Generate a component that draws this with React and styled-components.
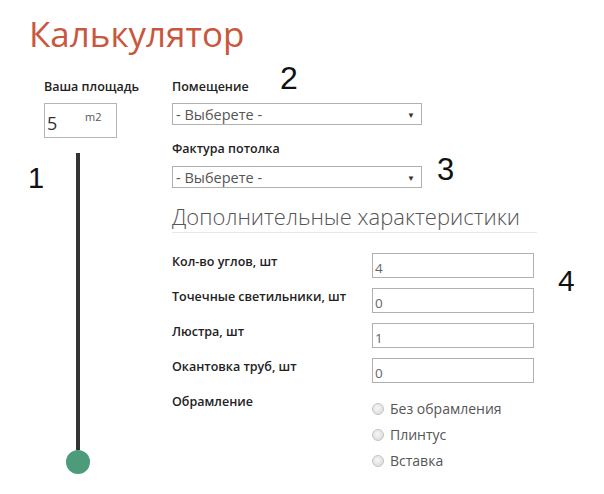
import styled, { createGlobalStyle } from "styled-components"

const GlobalStyle = createGlobalStyle`
  body {
    margin: 0;
    background: #fff;
    font-family: "Open Sans", "Noto Sans", sans-serif;
    color: #222;
  }
`

const Page = styled.div`
  position: relative;
  width: 604px;
  height: 494px;
  overflow: hidden;
`
const Title = styled.h1`
  margin: 14px 0 0 29px;
  font-size: 35px;
  line-height: 40px;
  font-weight: 400;
  color: #c9573e;
`
const Body = styled.div`
  display: flex;
  margin-top: 24px;
  padding-left: 44px;
`
const LeftColumn = styled.div`
  width: 128px;
  display: flex;
  flex-direction: column;
`
const RightColumn = styled.div`
  width: 365px;
  display: flex;
  flex-direction: column;
`
const Label = styled.div`
  font-size: 12.5px;
  line-height: 18px;
  font-weight: 600;
  color: #222;
  margin-bottom: ${(p) => p.$gap || 0}px;
`
const AreaBox = styled.div`
  width: 73px;
  height: 35px;
  box-sizing: border-box;
  border: 1px solid #b5b5b5;
  display: flex;
  align-items: flex-start;
`
const AreaInput = styled.input`
  width: 34px;
  border: none;
  outline: none;
  padding: 8px 0 0 2px;
  font-family: inherit;
  font-size: 18px;
  line-height: 22px;
  color: #333;
  background: transparent;
`
const Unit = styled.span`
  margin-left: 4px;
  padding-top: 6px;
  font-size: 11px;
  line-height: 14px;
  color: #555;
`
const Slider = styled.div`
  width: 24px;
  margin: 15px 0 0 22px;
  display: flex;
  flex-direction: column;
  align-items: center;
`
const Track = styled.div`
  width: 4px;
  height: 297px;
  background: #333;
`
const Knob = styled.div`
  width: 24px;
  height: 24px;
  border-radius: 50%;
  background: #4c9b7b;
`
const Field = styled.div`
  display: flex;
  flex-direction: column;
  margin-bottom: 15px;
`
const Select = styled.div`
  width: 250px;
  height: 22px;
  box-sizing: border-box;
  border: 1px solid #b0b0b0;
  display: flex;
  align-items: center;
  justify-content: space-between;
  padding: 0 6px 0 3px;
  font-size: 14.5px;
  color: #555;
`
const Arrow = styled.span`
  font-size: 8px;
  color: #333;
`
const Heading = styled.h2`
  margin: -2px 0 20px;
  padding-bottom: 1px;
  font-size: 22px;
  line-height: 30px;
  font-weight: 300;
  color: #555;
  border-bottom: 1px solid #e8e8e8;
`
const Row = styled.div`
  display: flex;
  align-items: flex-start;
  margin-bottom: 10px;
`
const RowLabel = styled(Label)`
  width: 200px;
`
const NumInput = styled.input`
  width: 162px;
  height: 25px;
  box-sizing: border-box;
  border: 1px solid #b0b0b0;
  outline: none;
  padding: 4px 0 0 2px;
  font-family: inherit;
  font-size: 13.5px;
  color: #666;
`
const RadioGroup = styled.div`
  display: flex;
  flex-direction: column;
  margin-top: 3px;
`
const RadioItem = styled.label`
  display: flex;
  align-items: center;
  height: 26px;
  font-size: 14px;
  line-height: 26px;
  color: #555;
`
const RadioDot = styled.span`
  width: 12px;
  height: 12px;
  box-sizing: border-box;
  border-radius: 50%;
  border: 1px solid #c4c4c4;
  background: radial-gradient(circle at 45% 40%, #f7f7f7 0%, #dcdcdc 80%);
  margin: 0 6px 0 0;
`
const Mark = styled.span`
  position: absolute;
  font-family: "Liberation Sans", Arial, sans-serif;
  font-size: ${(p) => p.$size}px;
  line-height: 1;
  color: #111;
`

const rows = [
  ["Кол-во углов, шт", "4"],
  ["Точечные светильники, шт", "0"],
  ["Люстра, шт", "1"],
  ["Окантовка труб, шт", "0"],
]
const frames = ["Без обрамления", "Плинтус", "Вставка"]

function App() {
  return (
    <Page>
      <GlobalStyle />
      <Title>Калькулятор</Title>
      <Body>
        <LeftColumn>
          <Label $gap={7}>Ваша площадь</Label>
          <AreaBox>
            <AreaInput defaultValue="5" />
            <Unit>m2</Unit>
          </AreaBox>
          <Slider>
            <Track />
            <Knob />
          </Slider>
        </LeftColumn>
        <RightColumn>
          <Field>
            <Label $gap={7}>Помещение</Label>
            <Select>
              <span>- Выберете -</span>
              <Arrow>▼</Arrow>
            </Select>
          </Field>
          <Field>
            <Label $gap={8}>Фактура потолка</Label>
            <Select>
              <span>- Выберете -</span>
              <Arrow>▼</Arrow>
            </Select>
          </Field>
          <Heading>Дополнительные характеристики</Heading>
          {rows.map(([label, value]) => (
            <Row key={label}>
              <RowLabel>{label}</RowLabel>
              <NumInput defaultValue={value} />
            </Row>
          ))}
          <Row>
            <RowLabel>Обрамление</RowLabel>
            <RadioGroup>
              {frames.map((f) => (
                <RadioItem key={f}>
                  <RadioDot />
                  {f}
                </RadioItem>
              ))}
            </RadioGroup>
          </Row>
        </RightColumn>
      </Body>
      <Mark $size={29} style={{ left: 28, top: 164 }}>1</Mark>
      <Mark $size={32} style={{ left: 280, top: 62 }}>2</Mark>
      <Mark $size={31} style={{ left: 437, top: 154 }}>3</Mark>
      <Mark $size={30} style={{ left: 558, top: 266 }}>4</Mark>
    </Page>
  )
}
export default App
